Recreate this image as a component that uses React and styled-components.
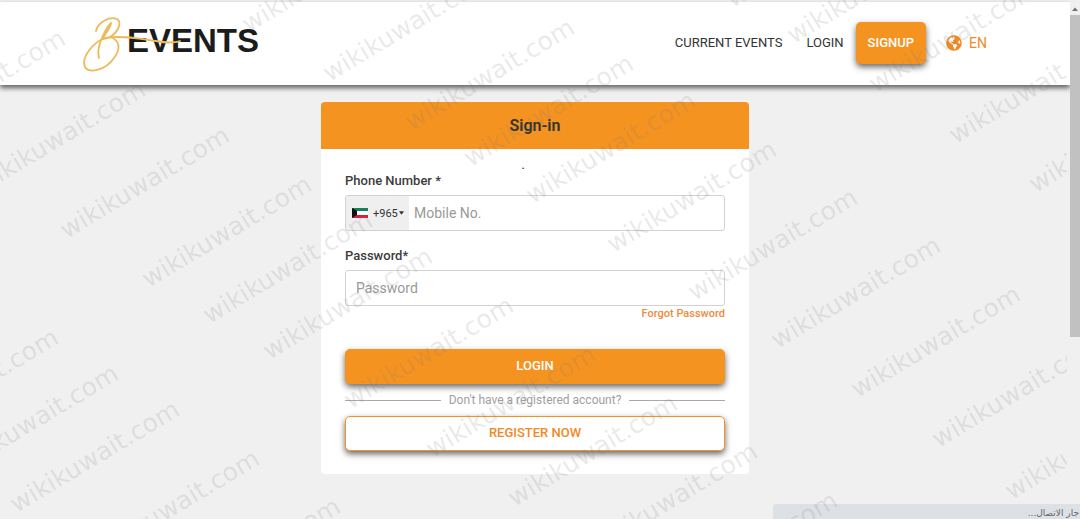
import styled, { createGlobalStyle } from "styled-components"
import { FaGlobeAmericas } from "react-icons/fa"

// baseline start of every watermark
const marks = [
  [-105, 136], [-25, 187], [59, 233], [141, 282], [202, 318], [262, 354], [343, 403], [425, 452], [507, 501], [587, 549], [667, 598],
  [-112, 435], [-52, 471], [9, 507], [89, 556], [170, 604],
  [241, 27], [322, 76], [404, 125], [463, 161], [525, 198], [606, 247], [687, 295], [770, 343], [850, 392], [931, 442], [1004, 494],
  [725, 2], [786, 38], [868, 87], [948, 138], [1028, 187],
]

export default function App() {
  return (
    <>
      <GlobalStyle />
      <Window>
        <Page>
          <Header />
          <SignIn />
        </Page>
        <ScrollBar>
          <ScrollArrow viewBox="0 0 10 13">
            <path d="M2 9L5 5.500L8 9Z" fill="#707070" />
          </ScrollArrow>
          <Thumb />
        </ScrollBar>
        <StatusBar dir="rtl" lang="ar">جار الاتصال...</StatusBar>
        <Watermarks aria-hidden="true">
          {marks.map(([x, y]) => (
            <Mark key={`${x}/${y}`} $x={x} $y={y}>wikikuwait.com</Mark>
          ))}
        </Watermarks>
      </Window>
    </>
  )
}

function Header() {
  return (
    <TopBar>
      <Container>
        <Logo href="#">
          <span>EVENTS</span>
          <Script viewBox="0 0 110 62" aria-hidden="true">
            <path d="M17 18C19 9 31 3 38 6C44 10 38 20 31 24C28 26 25 26 23 26" />
            <path d="M31 24C41 27 42 36 35 45C27 57 10 61 6 54C2 45 13 30 26 25C44 22 62 26 77 28C88 30 96 30 101 28" />
            <path d="M32 10C27 15 24 22 21 30C19 36 19 41 20 45M32 10C32 14 27 20 24 25" />
          </Script>
        </Logo>
        <Nav>
          <NavLink href="#">CURRENT EVENTS</NavLink>
          <NavLink href="#">LOGIN</NavLink>
          <SignUp type="button">SIGNUP</SignUp>
          <Language href="#">
            <FaGlobeAmericas />
            EN
          </Language>
        </Nav>
      </Container>
    </TopBar>
  )
}

function SignIn() {
  return (
    <Card>
      <CardTitle>Sign-in</CardTitle>
      <Form onSubmit={(e) => e.preventDefault()}>
        <Dot>.</Dot>
        <Label htmlFor="phone">Phone Number *</Label>
        <Field>
          <Country>
            <Flag viewBox="0 0 16 10" aria-hidden="true">
              <path d="M0 0H16V10H0Z" fill="#fff" />
              <path d="M0 0H16V3H0Z" fill="#17805a" />
              <path d="M0 7H16V10H0Z" fill="#d8203a" />
              <path d="M0 0L5 3V7L0 10Z" fill="#111" />
            </Flag>
            <Code aria-label="Country code" defaultValue="965">
              <option value="965">+965</option>
            </Code>
            <Caret viewBox="0 0 6 4" aria-hidden="true">
              <path d="M0 0H6L3 4Z" fill="#333" />
            </Caret>
          </Country>
          <Input id="phone" type="tel" placeholder="Mobile No." $tight />
        </Field>
        <Label htmlFor="password">Password*</Label>
        <Field>
          <Input id="password" type="password" placeholder="Password" />
        </Field>
        <Forgot href="#">Forgot Password</Forgot>
        <Button type="submit">LOGIN</Button>
        <Divider>Don't have a registered account?</Divider>
        <Button type="button" $outline>REGISTER NOW</Button>
      </Form>
    </Card>
  )
}

const GlobalStyle = createGlobalStyle`
  * {
    box-sizing: border-box;
  }
  body {
    margin: 0;
    background-color: #f0f0f0;
    font-family: Roboto, "Liberation Sans", sans-serif;
    color: #3c3c3c;
  }
  button, input, select {
    font-family: inherit;
  }
  a {
    text-decoration: none;
  }
`
const Window = styled.div`
  position: relative;
  display: flex;
  min-height: 100vh;
  padding-top: 2px;
  overflow: hidden;
`
const Page = styled.div`
  flex: 1;
  min-width: 0;
`
const TopBar = styled.header`
  display: flex;
  justify-content: center;
  padding: 0 24px;
  background-color: #fff;
  box-shadow: 0 3px 5px rgba(0, 0, 0, 0.6);
`
const Container = styled.div`
  display: flex;
  align-items: center;
  justify-content: space-between;
  width: 100%;
  max-width: 904px;
  height: 83px;
`
const Logo = styled.a`
  position: relative;
  padding: 0 0 6px 44px;
  color: #1c1c1c;
  font-family: "Liberation Sans", Arial, sans-serif;
  font-size: 33px;
  font-weight: 700;
  line-height: 56px;
`
const Script = styled.svg`
  position: absolute;
  top: 0;
  left: -4px;
  width: 110px;
  height: 62px;
  fill: none;
  stroke: #edba58;
  stroke-width: 1.8;
  stroke-linecap: round;
`
const Nav = styled.nav`
  display: flex;
  align-items: center;
  padding-bottom: 2px;
  font-size: 13px;
`
const NavLink = styled.a`
  padding: 0 12px;
  color: #333;
`
const SignUp = styled.button`
  height: 42px;
  padding: 0 12px;
  border: 0;
  border-radius: 5px;
  background-color: #f59321;
  box-shadow: 0 3px 6px rgba(0, 0, 0, 0.6);
  color: #fff;
  font-size: 13px;
  font-weight: 500;
`
const Language = styled.a`
  display: flex;
  align-items: center;
  gap: 7px;
  padding-left: 20px;
  color: #f08a24;
  font-size: 14px;
  svg {
    width: 16px;
    height: 16px;
  }
`
const Card = styled.main`
  width: 100%;
  max-width: 428px;
  margin: 17px auto 0;
  border-radius: 4px;
  overflow: hidden;
  background-color: #fff;
`
const CardTitle = styled.h1`
  margin: 0;
  background-color: #f59321;
  color: #333;
  font-size: 16px;
  font-weight: 600;
  line-height: 47px;
  text-align: center;
`
const Form = styled.form`
  display: flex;
  flex-direction: column;
  padding: 8px 24px 23px;
`
const Dot = styled.span`
  padding-right: 24px;
  color: #000;
  font-size: 12px;
  line-height: 16px;
  text-align: center;
`
const Label = styled.label`
  font-size: 13px;
  font-weight: 500;
  line-height: 16px;
  margin-bottom: 6px;
`
const Field = styled.div`
  display: flex;
  height: 36px;
  border: 1px solid #d2d2d2;
  border-radius: 3px;
  overflow: hidden;
  & + label {
    margin-top: 17px;
  }
`
const Country = styled.div`
  display: flex;
  align-items: center;
  width: 63px;
  padding-left: 6px;
  background-color: #efefef;
`
const Flag = styled.svg`
  width: 16px;
  height: 10px;
  margin-right: 5px;
`
const Code = styled.select`
  appearance: none;
  width: 26px;
  padding: 0;
  border: 0;
  background: none;
  color: #333;
  font-size: 11px;
`
const Caret = styled.svg`
  width: 5px;
  height: 4px;
`
const Input = styled.input`
  flex: 1;
  min-width: 0;
  padding: 0 ${(props) => (props.$tight ? "5px" : "10px")};
  border: 0;
  background: none;
  color: #333;
  font-size: 14px;
  &::placeholder {
    color: #999;
  }
`
const Forgot = styled.a`
  align-self: flex-end;
  color: #f08a3c;
  font-size: 11px;
  font-weight: 500;
  line-height: 16px;
`
const Button = styled.button`
  height: 35px;
  padding: 0 0 2px;
  border: 1px solid #f59321;
  border-radius: 5px;
  background-color: ${(props) => (props.$outline ? "#fff" : "#f59321")};
  box-shadow: 0 3px 6px rgba(0, 0, 0, 0.6);
  color: ${(props) => (props.$outline ? "#f08a24" : "#fff")};
  font-size: 13px;
  font-weight: 500;
  a + & {
    margin-top: 27px;
  }
`
const Divider = styled.div`
  display: flex;
  align-items: center;
  gap: 8px;
  height: 32px;
  color: #a0a0a0;
  font-size: 12px;
  &::before, &::after {
    content: "";
    flex: 1;
    height: 1px;
    background-color: #aaa;
  }
`
const ScrollBar = styled.div`
  width: 10px;
  background-color: #f0f0f0;
`
const ScrollArrow = styled.svg`
  display: block;
  width: 10px;
  height: 13px;
`
const Thumb = styled.div`
  height: 322px;
  background-color: #c1c1c1;
`
const StatusBar = styled.div`
  position: absolute;
  right: 0;
  bottom: 0;
  width: 307px;
  height: 15px;
  padding: 2px 1px 0;
  border-top-left-radius: 3px;
  background-color: #dde1e5;
  color: #666;
  font-family: "DejaVu Sans", sans-serif;
  font-size: 9px;
  line-height: 14px;
`
const Watermarks = styled.div`
  position: absolute;
  inset: 0 13px 0 0;
  overflow: hidden;
  pointer-events: none;
`
const Mark = styled.span`
  position: absolute;
  left: ${(props) => props.$x + 8}px;
  top: ${(props) => props.$y - 17}px;
  color: rgba(120, 120, 120, 0.17);
  font-family: "DejaVu Sans", sans-serif;
  font-size: 25px;
  line-height: 30px;
  transform: rotate(-31deg);
  transform-origin: 0 24px;
  white-space: nowrap;
`
